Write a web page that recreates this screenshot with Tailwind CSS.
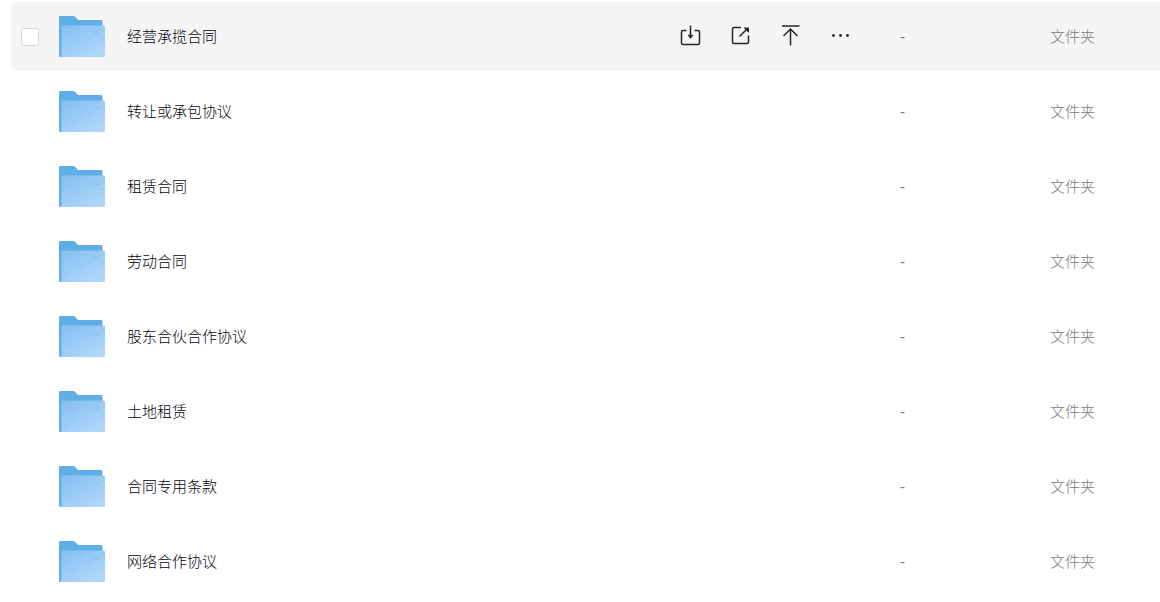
<!DOCTYPE html>
<html lang="zh-CN">
<head>
<meta charset="utf-8">
<meta name="viewport" content="width=device-width, initial-scale=1">
<title>文件列表</title>
<script src="https://cdn.jsdelivr.net/npm/@tailwindcss/browser@4"></script>
</head>
<body class="bg-white font-['Liberation_Sans','Noto_Sans_CJK_SC',sans-serif] text-[15px] leading-6 font-light text-[#03040a]">
<svg class="absolute h-0 w-0" aria-hidden="true">
  <defs>
    <linearGradient id="back" x1="0" y1="0" x2="0" y2="1"><stop offset="0" stop-color="#5faee6"/><stop offset="1" stop-color="#68b0ea"/></linearGradient>
    <linearGradient id="front" x1="0" y1="0" x2="0.7" y2="1"><stop offset="0" stop-color="#83bff0"/><stop offset="1" stop-color="#afd6fa"/></linearGradient>
    <symbol id="folder" viewBox="0 0 46 44">
      <path d="M0 2Q0 1 1.500 1H14.500Q15.500 1 16 1.700L19 5H42.500Q43.500 5 43.500 6.500V42H1Q0 42 0 41Z" fill="url(#back)"/>
      <path d="M2.500 11.500Q2.500 10.500 3.500 10.500H44.500Q46 10.500 46 12V40.500Q46 42 44.500 42H2.500Z" fill="url(#front)"/>
      <path d="M34 17H41M34 19.500H41" stroke="#79b7ec" stroke-width=".5"/>
    </symbol>
  </defs>
</svg>
<main class="pl-[11px]">
  <table class="-mt-1 w-full table-fixed border-separate border-spacing-x-0 border-spacing-y-[6px] text-left" aria-label="文件列表">
    <colgroup><col class="w-12"><col><col class="w-[235px]"><col class="w-[150px]"><col class="w-[110px]"></colgroup>
    <tbody>
      <tr class="h-[69px] bg-[#f5f5f6]">
        <td class="rounded-l-md p-0 pl-[10px]"><input type="checkbox" aria-label="选择 经营承揽合同" class="block h-[18px] w-[18px] appearance-none rounded-[3px] border border-[#d8d8da] bg-white checked:bg-[#5faee6]"></td>
        <td class="p-0"><a href="#" class="flex items-center gap-[22px]"><svg class="h-[44px] w-[46px] shrink-0" aria-hidden="true"><use href="#folder"/></svg>经营承揽合同</a></td>
        <td class="p-0">
          <div class="flex">
            <button type="button" aria-label="下载" class="flex w-[50px] justify-center"><svg class="h-[26px] w-6" viewBox="0 0 24 26" fill="none" stroke="#25262b" stroke-width="1.500"><path d="M8.500 6.500H5Q3.500 6.500 3.500 8V19Q3.500 20.500 5 20.500H20Q21.500 20.500 21.500 19V8Q21.500 6.500 20 6.500H16.500M12.500 1.500V13"/><path d="M10.300 11.200H14.700L12.500 14.300Z" fill="#25262b" stroke-width="1" stroke-linejoin="round"/></svg></button>
            <button type="button" aria-label="分享" class="flex w-[50px] justify-center"><svg class="h-[26px] w-6" viewBox="0 0 24 26" fill="none" stroke="#25262b" stroke-width="1.500"><path d="M13 3.500H6Q4.500 3.500 4.500 5V18Q4.500 19.500 6 19.500H19Q20.500 19.500 20.500 18V11.500M11.500 12.500L19 5"/><path d="M16.300 4H20.500V8.200Z" fill="#25262b" stroke-width="1" stroke-linejoin="round"/></svg></button>
            <button type="button" aria-label="置顶" class="flex w-[50px] justify-center"><svg class="h-[26px] w-6" viewBox="0 0 24 26" fill="none" stroke="#25262b" stroke-width="1.500"><path d="M4 2H21.500M12.500 21.500V5M5.500 12L12.500 5L19.500 12"/></svg></button>
            <button type="button" aria-label="更多" class="flex w-[50px] justify-center"><svg class="h-[26px] w-6" viewBox="0 0 24 26" fill="#25262b"><circle cx="5.500" cy="11.500" r="1.400"/><circle cx="12.500" cy="11.500" r="1.400"/><circle cx="19.500" cy="11.500" r="1.400"/></svg></button>
          </div>
        </td>
        <td class="p-0 text-[#77787d]">-</td>
        <td class="p-0 text-[#77787d]">文件夹</td>
      </tr>
      <tr class="h-[69px]">
        <td class="p-0"></td>
        <td class="p-0"><a href="#" class="flex items-center gap-[22px]"><svg class="h-[44px] w-[46px] shrink-0" aria-hidden="true"><use href="#folder"/></svg>转让或承包协议</a></td>
        <td class="p-0"></td>
        <td class="p-0 text-[#77787d]">-</td>
        <td class="p-0 text-[#77787d]">文件夹</td>
      </tr>
      <tr class="h-[69px]">
        <td class="p-0"></td>
        <td class="p-0"><a href="#" class="flex items-center gap-[22px]"><svg class="h-[44px] w-[46px] shrink-0" aria-hidden="true"><use href="#folder"/></svg>租赁合同</a></td>
        <td class="p-0"></td>
        <td class="p-0 text-[#77787d]">-</td>
        <td class="p-0 text-[#77787d]">文件夹</td>
      </tr>
      <tr class="h-[69px]">
        <td class="p-0"></td>
        <td class="p-0"><a href="#" class="flex items-center gap-[22px]"><svg class="h-[44px] w-[46px] shrink-0" aria-hidden="true"><use href="#folder"/></svg>劳动合同</a></td>
        <td class="p-0"></td>
        <td class="p-0 text-[#77787d]">-</td>
        <td class="p-0 text-[#77787d]">文件夹</td>
      </tr>
      <tr class="h-[69px]">
        <td class="p-0"></td>
        <td class="p-0"><a href="#" class="flex items-center gap-[22px]"><svg class="h-[44px] w-[46px] shrink-0" aria-hidden="true"><use href="#folder"/></svg>股东合伙合作协议</a></td>
        <td class="p-0"></td>
        <td class="p-0 text-[#77787d]">-</td>
        <td class="p-0 text-[#77787d]">文件夹</td>
      </tr>
      <tr class="h-[69px]">
        <td class="p-0"></td>
        <td class="p-0"><a href="#" class="flex items-center gap-[22px]"><svg class="h-[44px] w-[46px] shrink-0" aria-hidden="true"><use href="#folder"/></svg>土地租赁</a></td>
        <td class="p-0"></td>
        <td class="p-0 text-[#77787d]">-</td>
        <td class="p-0 text-[#77787d]">文件夹</td>
      </tr>
      <tr class="h-[69px]">
        <td class="p-0"></td>
        <td class="p-0"><a href="#" class="flex items-center gap-[22px]"><svg class="h-[44px] w-[46px] shrink-0" aria-hidden="true"><use href="#folder"/></svg>合同专用条款</a></td>
        <td class="p-0"></td>
        <td class="p-0 text-[#77787d]">-</td>
        <td class="p-0 text-[#77787d]">文件夹</td>
      </tr>
      <tr class="h-[69px]">
        <td class="p-0"></td>
        <td class="p-0"><a href="#" class="flex items-center gap-[22px]"><svg class="h-[44px] w-[46px] shrink-0" aria-hidden="true"><use href="#folder"/></svg>网络合作协议</a></td>
        <td class="p-0"></td>
        <td class="p-0 text-[#77787d]">-</td>
        <td class="p-0 text-[#77787d]">文件夹</td>
      </tr>
    </tbody>
  </table>
</main>
</body>
</html>
